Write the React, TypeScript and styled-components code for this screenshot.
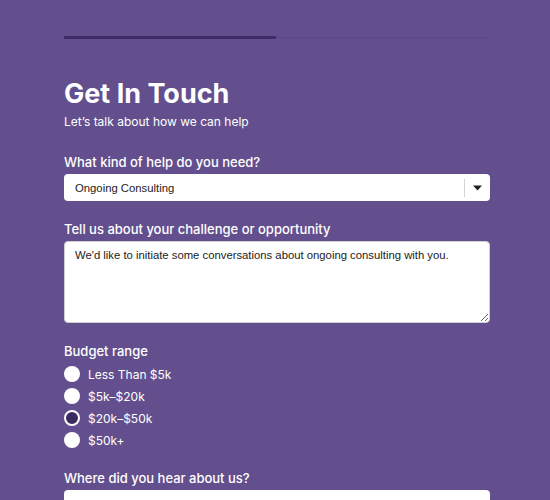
import React from "react";
import styled, { createGlobalStyle } from "styled-components";

const Global = createGlobalStyle`
  html, body { margin: 0; padding: 0; background: #634f8d; }
  body { font-family: Inter, "Noto Sans", sans-serif; color: #ffffff; }
  * { box-sizing: border-box; }
`;

const Page = styled.div`
  padding: 36px 0 40px 64px;
`;

const Container = styled.div`
  width: 426px;
  display: flex;
  flex-direction: column;
`;

const Progress = styled.div`
  height: 3px;
  display: flex;
  align-items: center;
`;

const Track = styled.div`
  flex: 1;
  height: 1px;
  background: #5a4684;
`;

const Fill = styled.div`
  height: 3px;
  background: #3f2c68;
  flex: 0 0 auto;
`;

const Title = styled.h1`
  margin: 39px 0 0;
  font-size: 27px;
  line-height: 32px;
  font-weight: 700;
`;

const Subtitle = styled.p`
  margin: 4px 0 0;
  font-size: 12px;
  line-height: 16px;
  font-weight: 400;
`;

const Label = styled.div<{ $top: number }>`
  margin-top: ${(p) => p.$top}px;
  font-size: 13px;
  line-height: 16px;
  font-weight: 500;
`;

const SelectBox = styled.div`
  margin-top: 4px;
  height: 27px;
  background: #fff;
  border-radius: 4px;
  display: flex;
  align-items: center;
  color: #222;
  font-family: "Liberation Sans", Arial, sans-serif;
  font-size: 11.3px;
`;

const SelectValue = styled.span`
  flex: 1;
  padding-left: 11px;
`;

const Divider = styled.span`
  width: 1px;
  height: 18px;
  background: #d4d4d4;
`;

const Caret = styled.span`
  width: 25px;
  display: flex;
  justify-content: center;
`;

const TextArea = styled.textarea`
  margin-top: 4px;
  height: 82px;
  width: 100%;
  background: #fff;
  border: 1px solid #cfcfcf;
  border-radius: 4px;
  padding: 6px 10px;
  font-family: "Liberation Sans", Arial, sans-serif;
  font-size: 11.3px;
  line-height: 15px;
  color: #222;
  outline: none;
  display: block;
`;

const RadioList = styled.div`
  margin-top: 4px;
  display: flex;
  flex-direction: column;
`;

const RadioRow = styled.label`
  height: 22px;
  display: flex;
  align-items: center;
  gap: 8px;
  font-size: 12px;
`;

const Circle = styled.span<{ $checked?: boolean }>`
  width: 16px;
  height: 16px;
  border-radius: 50%;
  background: ${(p) => (p.$checked ? "#3b2a60" : "#fff")};
  border: ${(p) => (p.$checked ? "2.5px solid #fff" : "none")};
  flex: 0 0 auto;
`;

const Input = styled.div`
  margin-top: 4px;
  height: 27px;
  background: #fff;
  border-radius: 4px;
`;

const options = ["Less Than $5k", "$5k–$20k", "$20k–$50k", "$50k+"];

export default function App() {
  return (
    <>
      <Global />
      <Page>
        <Container>
          <Progress>
            <Fill style={{ width: "212px" }} />
            <Track />
          </Progress>
          <Title>Get In Touch</Title>
          <Subtitle>Let’s talk about how we can help</Subtitle>
          <Label $top={24}>What kind of help do you need?</Label>
          <SelectBox>
            <SelectValue>Ongoing Consulting</SelectValue>
            <Divider />
            <Caret>
              <svg width="9" height="6" viewBox="0 0 9 6">
                <path d="M0 0.5 L9 0.5 L4.5 5.5 Z" fill="#222" />
              </svg>
            </Caret>
          </SelectBox>
          <Label $top={20}>Tell us about your challenge or opportunity</Label>
          <TextArea defaultValue="We'd like to initiate some conversations about ongoing consulting with you." />
          <Label $top={20}>Budget range</Label>
          <RadioList>
            {options.map((o, i) => (
              <RadioRow key={o}>
                <Circle $checked={i === 2} />
                {o}
              </RadioRow>
            ))}
          </RadioList>
          <Label $top={19}>Where did you hear about us?</Label>
          <Input />
        </Container>
      </Page>
    </>
  );
}
